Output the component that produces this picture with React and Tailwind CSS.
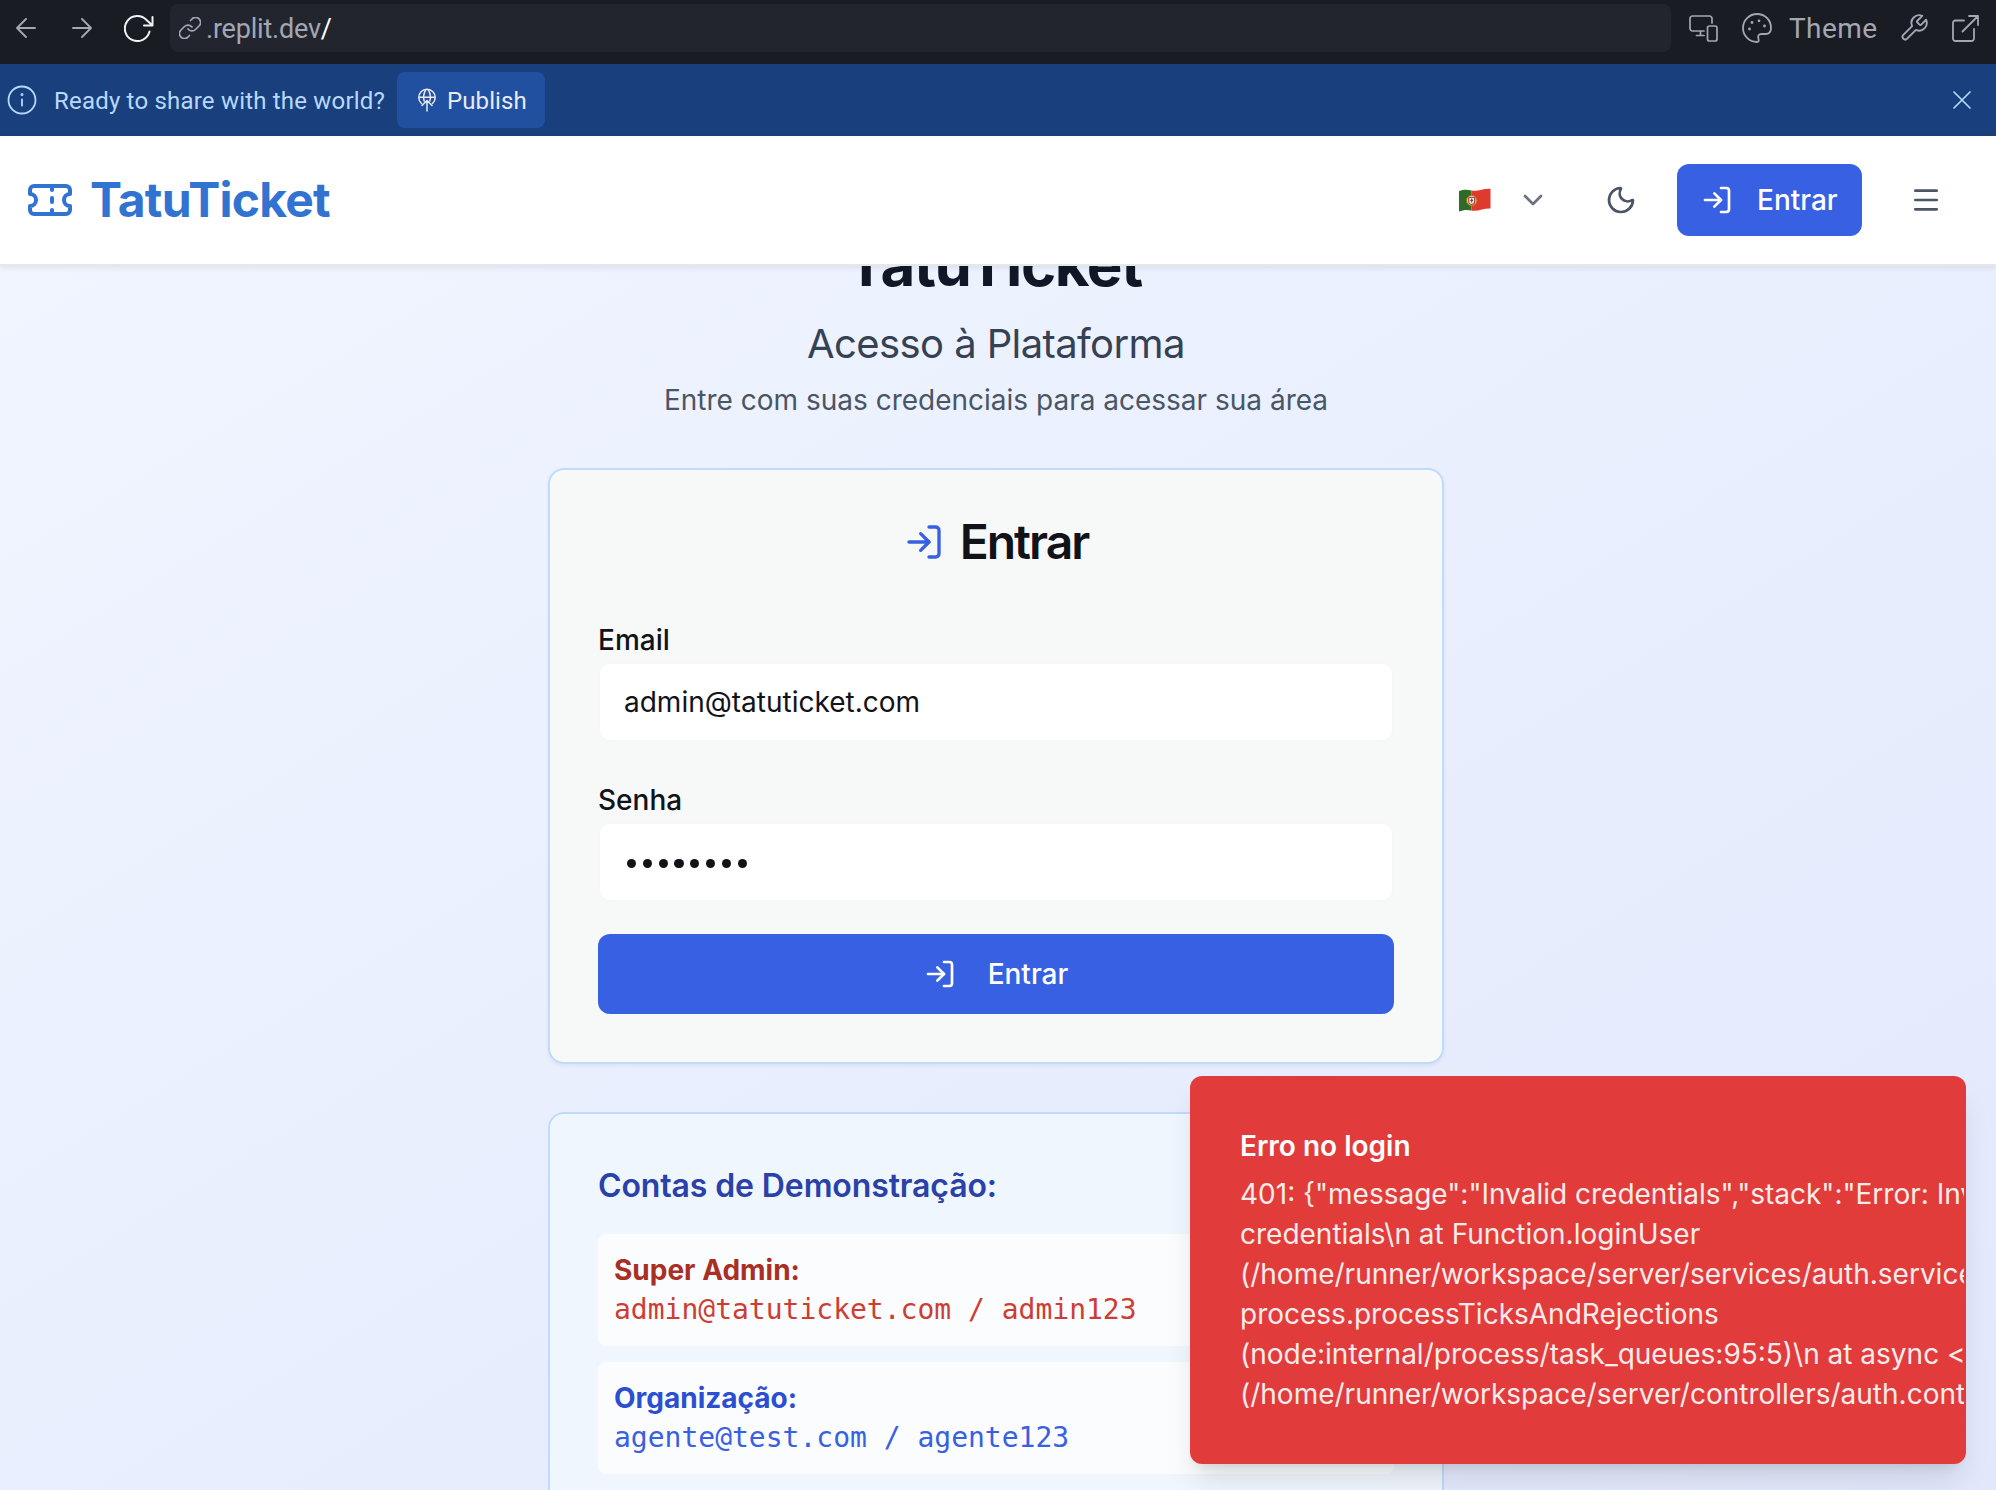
import { Ticket, ChevronDown, Moon, LogIn, Menu } from "lucide-react";

const s = { fill: "none", stroke: "currentColor", strokeLinecap: "round", strokeLinejoin: "round" };

function TopBar() {
  return (
    <div className="flex h-16 shrink-0 bg-[#1a1c23] font-[Roboto,sans-serif] text-[#a3a7b3]">
      <div className="flex h-14 w-[170px] shrink-0 items-center pl-4">
        <svg className="size-5" viewBox="0 0 20 20" {...s} strokeWidth="1.9"><path d="M19 10H1M10 1 1 10l9 9" /></svg>
        <svg className="ml-9 size-5" viewBox="0 0 20 20" {...s} strokeWidth="1.9"><path d="M1 10h18M10 1l9 9-9 9" /></svg>
        <svg className="ml-8 h-[27px] w-[30px] text-[#f1f2f5]" viewBox="0 0 30 27" {...s} strokeWidth="2"><path d="M25.500 16.500A12.500 12.500 0 1 1 22.500 5L28 10M28.500 2v8.500H20" /></svg>
      </div>
      <div className="mt-1 flex h-12 w-[1501px] items-center rounded-lg bg-[#22252e] pl-[9px]">
        <svg className="size-[22px]" viewBox="1 1 22 22" {...s} strokeWidth="1.700"><path d="M10 13a5 5 0 0 0 7.500.5l4-4a5 5 0 0 0-7-7l-2 2M14 11a5 5 0 0 0-7.500-.5l-4 4a5 5 0 0 0 7 7l2-2" /></svg>
        <span className="ml-[5px] pt-[3px] text-[27px] tracking-[-0.2px]">.replit.dev<span className="text-white">/</span></span>
      </div>
      <div className="flex h-14 items-center pl-[18px]">
        <svg className="h-[27px] w-[29px]" viewBox="0 0 29 27" {...s} strokeWidth="1.7"><path d="M23 8V3.500A2.500 2.500 0 0 0 20.500 1h-17A2.500 2.500 0 0 0 1 3.500v10A2.500 2.500 0 0 0 3.500 16H15M11.500 16v4.500M7.500 20.500H15" /><rect x="18.500" y="11" width="9.500" height="15" rx="2" /></svg>
        <svg className="ml-6 size-[30px]" viewBox="0 0 30 30" {...s} strokeWidth="1.8"><path d="M15 1a14 14 0 1 0 0 28c1.600 0 2-1.500 1.500-3-1-3 0-5 3-5h4c3.500 0 5.500-2.500 5.500-6C29 7 23 1 15 1Z" /><g fill="currentColor" stroke="none"><circle cx="10" cy="9.500" r="1.400" /><circle cx="17" cy="7.800" r="1.400" /><circle cx="22.500" cy="13" r="1.400" /><circle cx="7.500" cy="16" r="1.400" /></g></svg>
        <span className="ml-[17px] w-[87px] pt-px text-[28px] tracking-[0.4px]">Theme</span>
        <svg className="ml-6 size-7" viewBox="1 1 22 22" {...s} strokeWidth="1.500"><path d="M14.700 6.300a1 1 0 0 0 0 1.400l1.600 1.600a1 1 0 0 0 1.400 0l3.770-3.770a6 6 0 0 1-7.940 7.940l-6.910 6.910a2.120 2.120 0 0 1-3-3l6.910-6.910a6 6 0 0 1 7.940-7.940l-3.760 3.760z" /></svg>
        <svg className="ml-6 size-[27px]" viewBox="0 0 27 27" {...s} strokeWidth="1.800"><path d="M12 5.500H3.500A2.500 2.500 0 0 0 1 8v15.500A2.500 2.500 0 0 0 3.500 26h16a2.500 2.500 0 0 0 2.500-2.500V14M17 1h9v9M26 1 10.500 16.500" /></svg>
      </div>
    </div>
  );
}

function Banner() {
  return (
    <div className="flex h-[72px] shrink-0 items-center bg-[#193f7d] pl-[7px] pr-6 font-[Roboto,sans-serif] text-2xl text-[#b8d9ff]">
      <svg className="size-[30px]" viewBox="0 0 30 30" {...s} strokeWidth="1.800"><circle cx="15" cy="15" r="13.500" /><path d="M15 14.500v6" /><circle cx="15" cy="9.500" r=".6" /></svg>
      <span className="ml-[17px] w-[331px] whitespace-nowrap pt-0.5 tracking-[0.2px]">Ready to share with the world?</span>
      <button className="ml-3 flex h-14 w-[148px] items-center rounded-lg bg-[#2250a0] pl-[21px] text-[#e8eaf0]">
        <svg className="h-6 w-[18px]" viewBox="0 0 18 24" {...s} strokeWidth="1.500"><path d="M3.500 15.500a8.200 8.200 0 1 1 11 0M1 9.200h16M6.200 13C4.800 9 6 3 9 1c3 2 4.200 8 2.800 12M9 23V12.500M4 17.500l5-5 5 5" /></svg>
        <span className="ml-[11px] pt-0.5 tracking-[0.1px]">Publish</span>
      </button>
      <svg className="ml-auto size-5" viewBox="0 0 20 20" {...s} strokeWidth="1.700"><path d="m2 2 16 16M18 2 2 18" /></svg>
    </div>
  );
}

function Flag() {
  return (
    <svg className="h-6 w-8" viewBox="0 0 32 24">
      <path d="M0 3C5 1.500 8 1.500 12.500 2.500V22.500C8 21.500 4 22 0 23.500Z" fill="#2f6b28" />
      <path d="M12.500 2.500C20 3.500 25 0 31.500 .8V20.500C25 20 20 23.500 12.500 22.500Z" fill="#e03a2e" />
      <circle cx="12.700" cy="12.500" r="5.200" fill="#e9d34a" stroke="#7d7a20" strokeWidth=".8" />
      <path d="M9.800 9.500h5.800v4a2.900 2.900 0 0 1-5.800 0Z" fill="#fff" stroke="#d6362f" strokeWidth="1.200" />
      <path d="M12.700 10.500v4M11.200 12.300h3" stroke="#3657b5" strokeWidth="1.300" />
    </svg>
  );
}

function Header() {
  return (
    <header className="relative z-10 flex h-[130px] shrink-0 items-center border-b-2 border-gray-200 bg-white pl-[26px] text-gray-600 shadow-[0_2px_6px_rgba(0,0,0,0.08)]">
      <Ticket size={48} className="text-[#3273d1]" />
      <span className="ml-4 text-5xl font-bold tracking-[-0.78px] text-[#3273d1]">TatuTicket</span>
      <div className="ml-auto flex items-center">
        <Flag />
        <ChevronDown size={32} className="ml-[26px] text-gray-500" />
        <Moon size={32} className="ml-14" />
        <button className="ml-10 flex h-[72px] w-[185px] items-center rounded-xl bg-[#3860e2] pl-6 text-[28px] font-medium text-white">
          <LogIn size={32} />
          <span className="ml-6">Entrar</span>
        </button>
        <Menu size={32} className="ml-12 mr-[54px]" />
      </div>
    </header>
  );
}

function Field({ label, children }) {
  return (
    <div>
      <div className="text-[28px] font-medium leading-7 text-[#111318]">{label}</div>
      <div className="mt-2 flex h-20 items-center rounded-xl border-2 border-[#f5f8f7] bg-white px-6 text-[28px] text-[#111318]">{children}</div>
    </div>
  );
}

function Account({ name, login, nameClass, loginClass }) {
  return (
    <div className="h-28 rounded-lg bg-[#fbfcfe] px-4 pt-4 text-[28px] leading-10">
      <div className={"font-bold " + nameClass}>{name}</div>
      <div className={"font-['DejaVu_Sans_Mono',monospace] " + loginClass}>{login}</div>
    </div>
  );
}

function Toast() {
  const lines = [
    '401: {"message":"Invalid credentials","stack":"Error: Invalid',
    "credentials\\n at Function.loginUser",
    "(/home/runner/workspace/server/services/auth.service.ts",
    "process.processTicksAndRejections",
    "(node:internal/process/task_queues:95:5)\\n at async <anonymous>",
    "(/home/runner/workspace/server/controllers/auth.controller",
  ];
  return (
    <div className="absolute left-[1190px] top-[1076px] z-20 h-[388px] w-[776px] overflow-hidden rounded-xl bg-[#e13c3b] pl-[50px] pt-[50px] text-[28px] leading-10 text-white shadow-[0_20px_30px_-6px_rgba(0,0,0,0.12),0_8px_12px_-8px_rgba(0,0,0,0.12)]">
      <div className="font-semibold">Erro no login</div>
      <div className="mr-0.5 mt-2 overflow-hidden whitespace-pre opacity-90">
        {lines.map((l) => <div key={l}>{l}</div>)}
      </div>
    </div>
  );
}

export default function App() {
  return (
    <div className="relative flex h-[1490px] w-[1996px] flex-col overflow-hidden bg-white font-[Inter,sans-serif]">
      <TopBar />
      <Banner />
      <Header />
      <main className="flex min-h-0 flex-1 flex-col items-center bg-linear-to-br from-[#f0f5ff] to-[#e1e7fc] to-110% pr-1">
        <h1 className="-mt-[38px] mr-1 h-[72px] shrink-0 text-[60px] font-bold leading-[72px] tracking-[-1.4px] text-gray-900">TatuTicket</h1>
        <h2 className="mt-4 shrink-0 text-[40px] leading-[56px] tracking-[-0.6px] text-gray-700">Acesso à Plataforma</h2>
        <p className="mt-2 shrink-0 text-[28px] leading-10 text-gray-600">Entre com suas credenciais para acessar sua área</p>
        <section className="mt-12 h-[596px] w-[896px] shrink-0 rounded-2xl border-2 border-[#bfdbfe] bg-[#f7f9f8] px-12 shadow-[0_2px_4px_rgba(0,0,0,0.06)]">
          <div className="mt-12 flex h-12 items-center justify-center text-5xl font-semibold tracking-[-2px] text-[#111318]">
            <LogIn size={40} className="mr-4 text-[#3860e2]" />Entrar
          </div>
          <div className="mt-[60px] flex flex-col gap-11">
            <Field label="Email">admin@tatuticket.com</Field>
            <Field label="Senha">
              <div className="ml-[3px] mt-[3px] flex gap-[6.500px]">
                {[0, 1, 2, 3, 4, 5, 6, 7].map((i) => <span key={i} className="size-[9.300px] rounded-full bg-[#111318]" />)}
              </div>
            </Field>
          </div>
          <button className="mt-8 flex h-20 w-full items-center justify-center rounded-xl bg-[#3860e2] text-[28px] font-medium text-white">
            <LogIn size={32} className="mr-8" />Entrar
          </button>
        </section>
        <section className="mt-12 h-[600px] w-[896px] shrink-0 rounded-2xl border-2 border-[#bfdbfe] bg-[#f0f6fe] px-12 pt-12">
          <div className="text-[32px] font-semibold leading-[48px] tracking-[-0.12px] text-[#2941a8]">Contas de Demonstração:</div>
          <div className="mt-6 flex flex-col gap-4">
            <Account name="Super Admin:" login="admin@tatuticket.com / admin123" nameClass="text-[#a92f25]" loginClass="text-[#ce3d32]" />
            <Account name="Organização:" login="agente@test.com / agente123" nameClass="text-[#2b4fd0]" loginClass="text-[#3860e2]" />
          </div>
        </section>
      </main>
      <Toast />
    </div>
  );
}
